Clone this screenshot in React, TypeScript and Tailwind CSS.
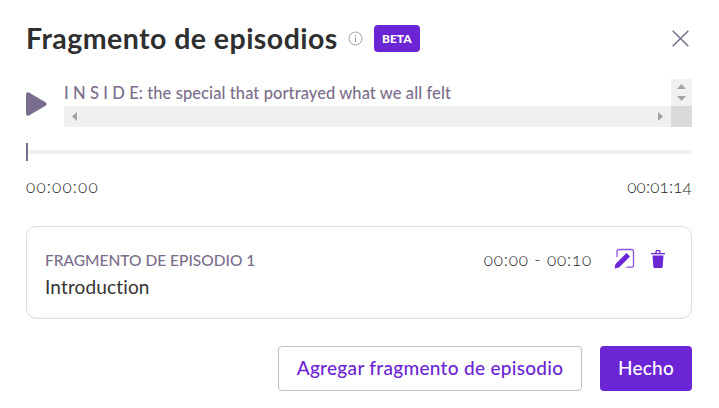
export default function App() {
  return (
    <div className="w-[719px] h-[408px] bg-white overflow-hidden pl-[26px] pr-[27px] pt-[25px] font-['Lato','Liberation_Sans',sans-serif] text-[#333]">
      <header className="flex items-center h-[27px]">
        <h1 className="text-[28.500px] leading-[27px] font-bold text-[#2f2f2f] tracking-[0.45px]">Fragmento de episodios</h1>
        <svg className="ml-[10px] text-[#999]" width="15" height="15" viewBox="0 0 15 15" fill="none" stroke="currentColor">
          <circle cx="7.500" cy="7.500" r="6.500" strokeWidth="0.9" />
          <path d="M7.500 6.500v4.500M7.500 4v1.300" strokeWidth="1.1" />
        </svg>
        <span className="ml-[11px] w-[46px] h-[27px] rounded-[4px] bg-[#6c25d5] text-white text-[12px] font-black flex items-center justify-center">BETA</span>
        <svg className="ml-auto mr-[3px]" width="17" height="17" viewBox="0 0 17 17" fill="none" stroke="#7b6e8c" strokeWidth="1.5">
          <path d="M.7.7l15.600 15.600M16.300.7L.7 16.300" />
        </svg>
      </header>

      <section className="flex mt-[27px] h-[48px]">
        <svg className="mt-[13px] shrink-0" width="21" height="24" viewBox="0 0 21 24" fill="#7b6e8c">
          <path d="M0 2.500C0 .8 1.500-.3 3 .6l16.500 9.600c1.400.8 1.400 2.800 0 3.600L3 23.400c-1.500.9-3-.2-3-1.900z" />
        </svg>
        <div className="ml-[17px] flex-1 grid grid-cols-[1fr_21px] grid-rows-[27px_21px]">
          <div className="text-[16.500px] leading-[28px] font-medium text-[#7b6e8c] whitespace-nowrap tracking-[0.08px]">I N S I D E: the special that portrayed what we all felt</div>
          <div className="bg-[#f1f1f1] flex flex-col items-center justify-center gap-[7px]">
            <svg width="9" height="5" viewBox="0 0 9 5" fill="#a3a3a3"><path d="M4.500 0L9 5H0z" /></svg>
            <svg width="9" height="5" viewBox="0 0 9 5" fill="#a3a3a3"><path d="M0 0h9L4.500 5z" /></svg>
          </div>
          <div className="bg-[#f0f0f0] flex items-center justify-between pl-[8px] pr-[8px]">
            <svg width="5" height="9" viewBox="0 0 5 9" fill="#a3a3a3"><path d="M5 0v9L0 4.500z" /></svg>
            <svg width="5" height="9" viewBox="0 0 5 9" fill="#a3a3a3"><path d="M0 0v9l5-4.500z" /></svg>
          </div>
          <div className="bg-[#dadada]" />
        </div>
      </section>

      <div className="relative mt-[23px] h-[4px] bg-[#f0f0f2]">
        <div className="absolute left-0 top-[-7px] w-[2px] h-[18px] bg-[#7b6e8c]" />
      </div>

      <div className="flex justify-between mt-[24px] text-[17px] leading-[18px] font-light text-[#222] oldstyle-nums">
        <span className="tracking-[1.2px]">00:00:00</span>
        <span className="tracking-[0.2px]">00:01:14</span>
      </div>

      <article className="mt-[30px] h-[93px] rounded-[10px] border border-[#dddde0] shadow-[inset_0_-3px_4px_-2px_rgba(0,0,0,0.06)] pl-[18px] pr-[26px] pt-[23px] flex">
        <div className="flex-1">
          <div className="text-[15.500px] leading-[20px] font-medium text-[#7b6e8c]">FRAGMENTO DE EPISODIO 1</div>
          <div className="mt-[7px] text-[19px] leading-[20px] text-[#333] tracking-[0.15px]">Introduction</div>
        </div>
        <span className="text-[17px] leading-[20px] font-light text-[#222] tracking-[0.85px] oldstyle-nums">00:00 - 00:10</span>
        <svg className="ml-[21px] -mt-[2px]" width="22" height="22" viewBox="0 0 22 22" fill="none">
          <path d="M4 9V3.500C4 2.200 5 1.500 6 1.500h13c1 0 1.500.8 1.500 2v14c0 1-.6 1.700-1.500 1.700h-5.500" stroke="#8b52e3" strokeWidth="1.300" />
          <path d="M1.500 20.500l1-4.500L13.500 5l3.500 3.500L6 19.500z" fill="#6c25d5" />
        </svg>
        <svg className="ml-[16px]" width="14" height="18" viewBox="0 0 14 18" fill="#6c25d5">
          <path d="M1.500 5.500h11l-.8 11c-.1.900-.7 1.500-1.600 1.500H3.900c-.9 0-1.500-.6-1.600-1.500z" />
          <path d="M0 3h4.500V1.300C4.500.6 5 0 5.800 0h2.400c.8 0 1.300.6 1.300 1.300V3H14v1.300H0zM5.700 3h2.600V1.200H5.700z" fillRule="evenodd" />
        </svg>
      </article>

      <footer className="flex justify-end gap-[18px] mt-[27px]">
        <button className="w-[304px] h-[45px] rounded-[4px] border border-[#c1bccb] text-[#6c25d5] text-[19px] font-medium bg-white tracking-[0.3px]">Agregar fragmento de episodio</button>
        <button className="w-[92px] h-[45px] rounded-[4px] bg-[#6c25d5] text-white text-[19px] font-medium tracking-[0.2px]">Hecho</button>
      </footer>
    </div>
  );
}
